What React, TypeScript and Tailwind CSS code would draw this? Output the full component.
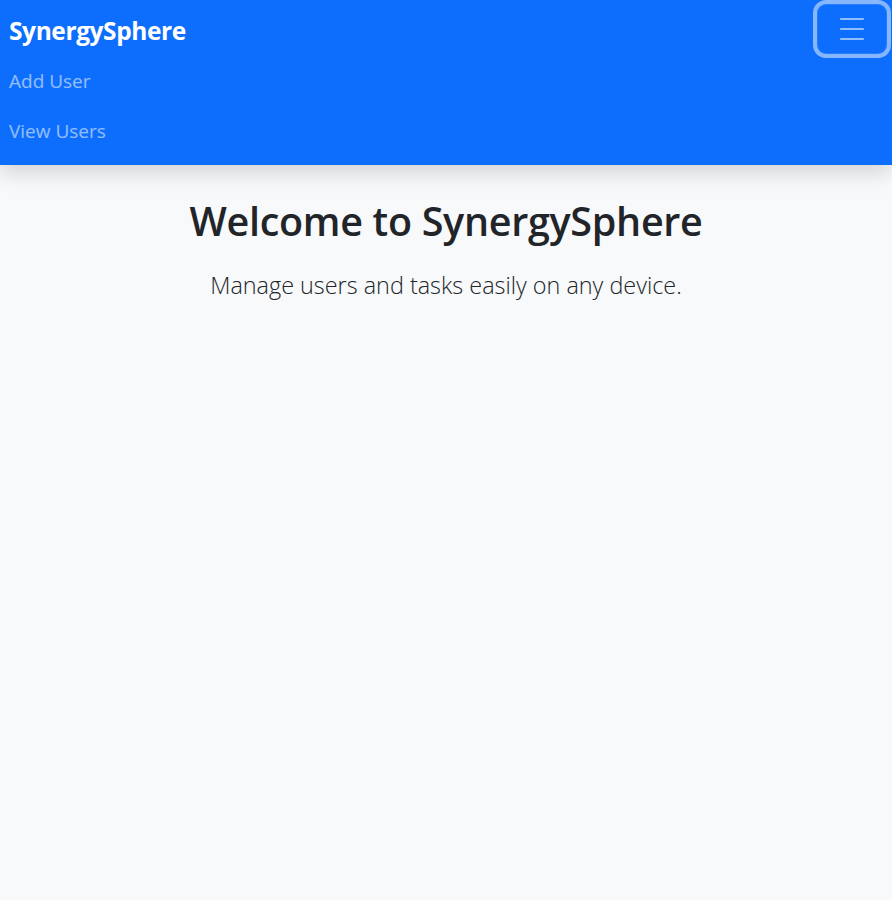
import { useState } from 'react';

const font = { fontFamily: '"Open Sans", "Noto Sans", sans-serif' };

export default function App() {
  const [open, setOpen] = useState(true);

  return (
    <div className="min-h-[900px] bg-[#f8f9fa]" style={font}>
      {/* Navbar */}
      <nav className="relative z-10 bg-[#0d6efd] shadow-[0_8px_20px_rgba(0,0,0,0.15)]">
        <div className="flex items-start justify-between pl-[9px] pr-[5px]">
          <div className="flex flex-col pt-[14px] pb-[9px]">
            <a href="#" className="text-[24.5px] font-bold leading-[34px] tracking-[-0.4px] text-white">
              SynergySphere
            </a>
            {open && (
              <ul className="mt-[8px] flex flex-col">
                <li>
                  <a href="#" className="block py-[10px] text-[19px] leading-[30px] text-white/55">Add User</a>
                </li>
                <li>
                  <a href="#" className="block py-[10px] text-[19px] leading-[30px] text-white/55">View Users</a>
                </li>
              </ul>
            )}
          </div>
          <button
            onClick={() => setOpen(o => !o)}
            className="mt-[4px] flex h-[50px] w-[70px] items-center justify-center rounded-[9px] border-[1px] border-white/10 shadow-[0_0_0_4px_rgba(255,255,255,0.5)]"
          >
            <svg width="30" height="30" viewBox="0 0 30 30">
              <path
                d="M4 5h22M4 15h22M4 25h22"
                stroke="rgba(255,255,255,0.55)"
                strokeWidth="2.2"
                strokeLinecap="round"
              />
            </svg>
          </button>
        </div>
      </nav>

      {/* Main */}
      <main className="pt-[33px] text-center text-[#212529]">
        <h1 className="text-[39.5px] font-semibold leading-[1.2] tracking-[-0.3px]">Welcome to SynergySphere</h1>
        <p className="mt-[23px] text-[23.4px] font-light leading-[1.5]">
          Manage users and tasks easily on any device.
        </p>
      </main>
    </div>
  );
}
